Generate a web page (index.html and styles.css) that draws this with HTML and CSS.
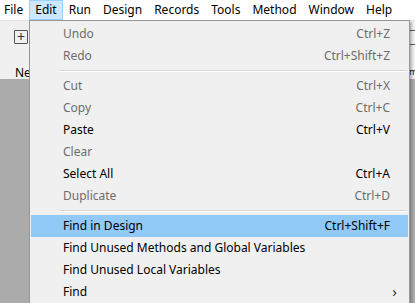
FILE: index.html
```html
<!DOCTYPE html>
<html lang="en">
<head>
  <meta charset="UTF-8">
  <title>Edit menu</title>
  <link rel="stylesheet" href="styles.css">
</head>
<body>
  <div class="app">
    <div class="menubar">
      <span class="menubar-item">File</span>
      <span class="menubar-item open">Edit</span>
      <span class="menubar-item">Run</span>
      <span class="menubar-item">Design</span>
      <span class="menubar-item">Records</span>
      <span class="menubar-item">Tools</span>
      <span class="menubar-item">Method</span>
      <span class="menubar-item">Window</span>
      <span class="menubar-item">Help</span>
    </div>

    <div class="toolbar">
      <div class="tool">
        <span class="tool-icon">+</span>
        <span class="tool-label">New</span>
      </div>
      <div class="tool tool-right">
        <span class="tool-icon"></span>
        <span class="tool-label">m</span>
      </div>
    </div>

    <div class="workspace"></div>

    <!-- Edit dropdown -->
    <div class="dropdown">
      <div class="item disabled"><span>Undo</span><span class="key">Ctrl+Z</span></div>
      <div class="item disabled"><span>Redo</span><span class="key">Ctrl+Shift+Z</span></div>
      <div class="sep"></div>
      <div class="item disabled"><span>Cut</span><span class="key">Ctrl+X</span></div>
      <div class="item disabled"><span>Copy</span><span class="key">Ctrl+C</span></div>
      <div class="item"><span>Paste</span><span class="key">Ctrl+V</span></div>
      <div class="item disabled"><span>Clear</span><span class="key"></span></div>
      <div class="item"><span>Select All</span><span class="key">Ctrl+A</span></div>
      <div class="item disabled"><span>Duplicate</span><span class="key">Ctrl+D</span></div>
      <div class="sep"></div>
      <div class="item active"><span>Find in Design</span><span class="key">Ctrl+Shift+F</span></div>
      <div class="item"><span>Find Unused Methods and Global Variables</span><span class="key"></span></div>
      <div class="item"><span>Find Unused Local Variables</span><span class="key"></span></div>
      <div class="item"><span>Find</span><span class="arrow">&rsaquo;</span></div>
    </div>
  </div>
</body>
</html>
```

FILE: styles.css
```css
html, body { margin: 0; height: 100%; }
body { font-family: "Noto Sans", "Open Sans", sans-serif; font-size: 12px; color: #000; overflow: hidden; }

.app { position: relative; height: 303px; display: flex; flex-direction: column; background: #ababab; }

.menubar { display: flex; height: 20px; align-items: stretch; background: #fff; }
.menubar-item { padding: 0 5px; line-height: 18px; border: 1px solid transparent; }
.menubar-item:first-child { padding-left: 3px; }
.menubar-item.open { background: #cce8ff; border-color: #99d1ff; }

.toolbar { height: 58px; background: #f0f0f0; border-top: 1px solid #e3e3e3; display: flex; }
.tool { display: flex; flex-direction: column; align-items: flex-start; padding: 9px 0 0 14px; }
.tool-icon {
  width: 12px; height: 13px; border: 1px solid #555; border-radius: 1px;
  font-size: 14px; line-height: 12px; text-align: center; color: #333;
}
.tool-label { margin-top: 20px; padding-left: 1px; }
.tool-right { margin-left: auto; padding-left: 0; width: 6px; }
.tool-right .tool-icon { width: 6px; border-right: none; border-radius: 0; }
.tool-right .tool-label { padding-left: 0; font-size: 9px; }

.workspace { flex: 1; }

.dropdown {
  position: absolute; left: 29px; top: 20px; width: 377px;
  background: #f0f0f0; border: 1px solid #979797;
  padding: 2px 1px 0;
  box-shadow: 2px 2px 2px rgba(0, 0, 0, 0.25);
  height: 290px;
}
.item { display: flex; justify-content: space-between; height: 22px; line-height: 21px; padding: 0 18px 0 32px; }
.item.disabled { color: #6d6d6d; }
.item.active { background: #91c9f7; }
.arrow { font-size: 15px; margin-right: -7px; color: #333; }
.sep { height: 1px; margin: 3px 1px 3px 28px; background: #d7d7d7; border-bottom: 1px solid #fff; }
```
